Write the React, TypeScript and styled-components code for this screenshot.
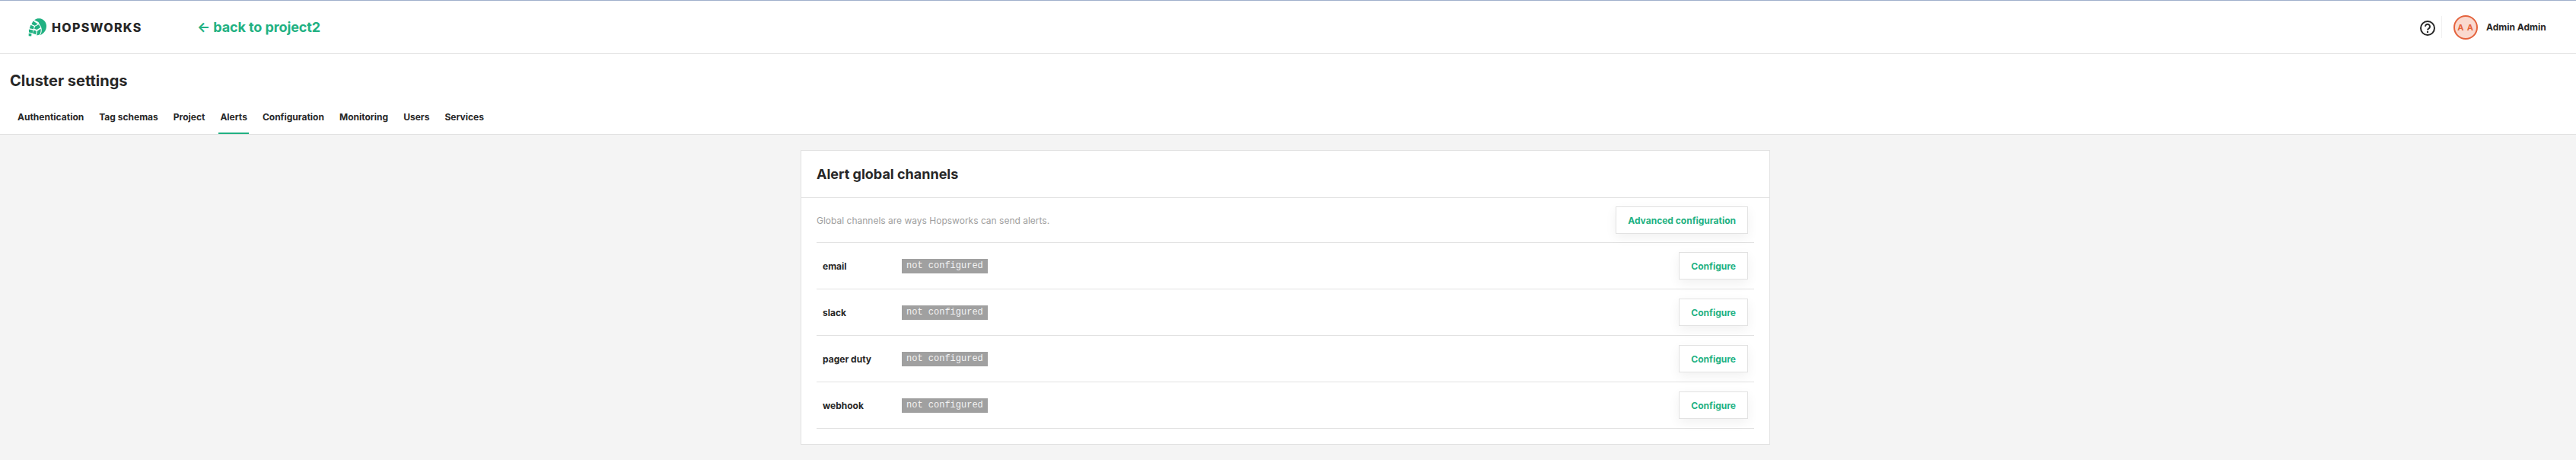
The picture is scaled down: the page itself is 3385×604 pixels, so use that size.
import React from 'react';
import styled, { createGlobalStyle } from 'styled-components';

const Global = createGlobalStyle`
  html, body { margin: 0; padding: 0; background: #f4f4f4; }
  body { font-family: Inter, "Liberation Sans", sans-serif; color: #272727; }
  * { box-sizing: border-box; }
`;
const Page = styled.div`
  width: 3385px; height: 604px; overflow: hidden; background: #f4f4f4;
  display: flex; flex-direction: column;
`;
const TopBar = styled.header`
  height: 71px; flex: none; background: #fff;
  border-top: 1px solid #a0b0cc; border-bottom: 1px solid #e2e2e2;
  display: flex; align-items: center; padding: 0 20px 0 37px;
`;
const Brand = styled.div`display: flex; align-items: center; gap: 7px; width: 222px;`;
const BrandName = styled.span`
  font-size: 16px; font-weight: 800; letter-spacing: 1.3px; color: #272727;
`;
const BackLink = styled.a`
  font-size: 18px; font-weight: 700; color: #21b182; letter-spacing: -0.1px;
`;
const Spacer = styled.div`flex: 1;`;
const Help = styled.svg`width: 20px; height: 20px; flex: none; margin-top: 3px;`;
const Divider = styled.div`
  width: 1px; height: 29px; background: #f0f0f0; margin: 0 15px 0 8px; flex: none;
`;
const UserBlock = styled.div`
  display: flex; align-items: center; gap: 11px; width: 141px; flex: none;
`;
const Avatar = styled.div`
  width: 32px; height: 32px; border-radius: 50%;
  border: 2px solid #e4633d; background: #fad9cf; color: #e4633d;
  display: flex; align-items: center; justify-content: center;
  font-size: 11px; font-weight: 700; letter-spacing: 0.8px;
`;
const UserName = styled.span`font-size: 12px; font-weight: 700; color: #272727;`;
const SubHeader = styled.section`
  height: 106px; flex: none; background: #fff; border-bottom: 1px solid #e2e2e2;
  display: flex; flex-direction: column; padding: 0 0 0 13px;
`;
const Title = styled.h1`
  margin: 23px 0 0; font-size: 20px; line-height: 24px; font-weight: 700; color: #272727;
`;
const Tabs = styled.nav`display: flex; gap: 20px; margin-top: 28px; padding-left: 10px;`;
const Tab = styled.a<{ $active?: boolean }>`
  height: 30px; font-size: 12px; font-weight: 700; line-height: 16px; padding: 0;
  color: #272727; position: relative;
  &::after {
    content: ''; display: ${p => (p.$active ? 'block' : 'none')};
    position: absolute; left: -2px; right: -2px; bottom: 0; height: 2px; background: #21b182;
  }
`;
const Main = styled.main`flex: 1; display: flex; justify-content: center; padding: 20px 7px 0 0;`;
const Card = styled.section`
  width: 1274px; height: 387px; background: #fff; border: 1px solid #e2e2e2;
  display: flex; flex-direction: column;
`;
const CardHead = styled.div`
  height: 62px; flex: none; border-bottom: 1px solid #e2e2e2;
  display: flex; align-items: center; padding-left: 20px;
`;
const CardTitle = styled.h2`margin: 0; font-size: 18px; font-weight: 700; color: #272727;`;
const Body = styled.div`padding: 0 20px; display: flex; flex-direction: column;`;
const DescRow = styled.div`
  height: 59px; border-bottom: 1px solid #e2e2e2; display: flex; align-items: center;
  justify-content: space-between; padding-right: 8px;
`;
const Desc = styled.span`font-size: 12px; color: #a0a0a0;`;
const Row = styled.div`
  height: 61px; border-bottom: 1px solid #e2e2e2; display: flex; align-items: center;
  padding: 0 8px;
`;
const Name = styled.span`width: 104px; font-size: 12px; font-weight: 700; color: #272727;`;
const Badge = styled.span`
  font-family: "Liberation Mono", monospace; font-size: 12px; line-height: 19px; height: 19px;
  background: #a0a0a0; color: #f4f4f4; padding: 0 6px; margin-top: 1px;
`;
const Button = styled.button`
  height: 36px; padding: 0 15px; background: #fff; border: 1px solid #e2e2e2;
  box-shadow: 0 5px 15px rgba(0,0,0,.06); font-family: inherit;
  font-size: 12px; font-weight: 700; color: #21b182;
`;
const RowButton = styled(Button)`margin-left: auto;`;

const Logo = () => (
  <svg width="24" height="24" viewBox="0 0 24 24">
    <path fill="#21b182" d="M8 2.200C10 .6 12.500 0 15 .2c5 .5 9 4.600 9 9.800 0 5.500-3 9.800-8.200 12.300 1.800-3 2.400-6.300 1.700-9.300-.4-1.900-1.200-3.400-2.300-4.600L13.500 5z"/>
    <path fill="#21b182" d="M6.600 3.500l6 3.900-3.800 2.300-4.400-2zM3.400 8.800l4.400 2-.8 3.400-5.200-.9zM9 10.800l4.700-2.600c1.200 1.100 2 2.500 2.500 3.800l-4.700 3.100-3.400-1.300zM.9 14.500l5.400 1-.5 3.900-4.800-.8zM7.400 15.500l3.400 1.300-.6 4.400-4.300-1.400zM12 16.800l4.500-3c.4 2.700 0 5.400-1.500 7.800l-3.700 1z"/>
    <path fill="#21b182" d="M.7 19.700l3.700.6-.2 3.300-3.500-.4z"/>
  </svg>
);

const channels = ['email', 'slack', 'pager duty', 'webhook'];
const tabs = ['Authentication', 'Tag schemas', 'Project', 'Alerts', 'Configuration', 'Monitoring', 'Users', 'Services'];

export default function App() {
  return (
    <Page>
      <Global />
      <TopBar>
        <Brand><Logo /><BrandName>HOPSWORKS</BrandName></Brand>
        <BackLink>← back to project2</BackLink>
        <Spacer />
        <Help viewBox="0 0 20 20" fill="none">
          <circle cx="10" cy="10" r="9" stroke="#272727" strokeWidth="2" />
          <path d="M7 7.800a3 3 0 1 1 4.600 2.500c-1 .6-1.600 1.100-1.600 2.200" stroke="#272727" strokeWidth="2" />
          <circle cx="10" cy="15" r="1.200" fill="#272727" />
        </Help>
        <Divider />
        <UserBlock>
          <Avatar>A A</Avatar>
          <UserName>Admin Admin</UserName>
        </UserBlock>
      </TopBar>
      <SubHeader>
        <Title>Cluster settings</Title>
        <Tabs>
          {tabs.map(t => <Tab key={t} $active={t === 'Alerts'}>{t}</Tab>)}
        </Tabs>
      </SubHeader>
      <Main>
        <Card>
          <CardHead><CardTitle>Alert global channels</CardTitle></CardHead>
          <Body>
            <DescRow>
              <Desc>Global channels are ways Hopsworks can send alerts.</Desc>
              <Button>Advanced configuration</Button>
            </DescRow>
            {channels.map(c => (
              <Row key={c}>
                <Name>{c}</Name>
                <Badge>not configured</Badge>
                <RowButton>Configure</RowButton>
              </Row>
            ))}
          </Body>
        </Card>
      </Main>
    </Page>
  );
}
